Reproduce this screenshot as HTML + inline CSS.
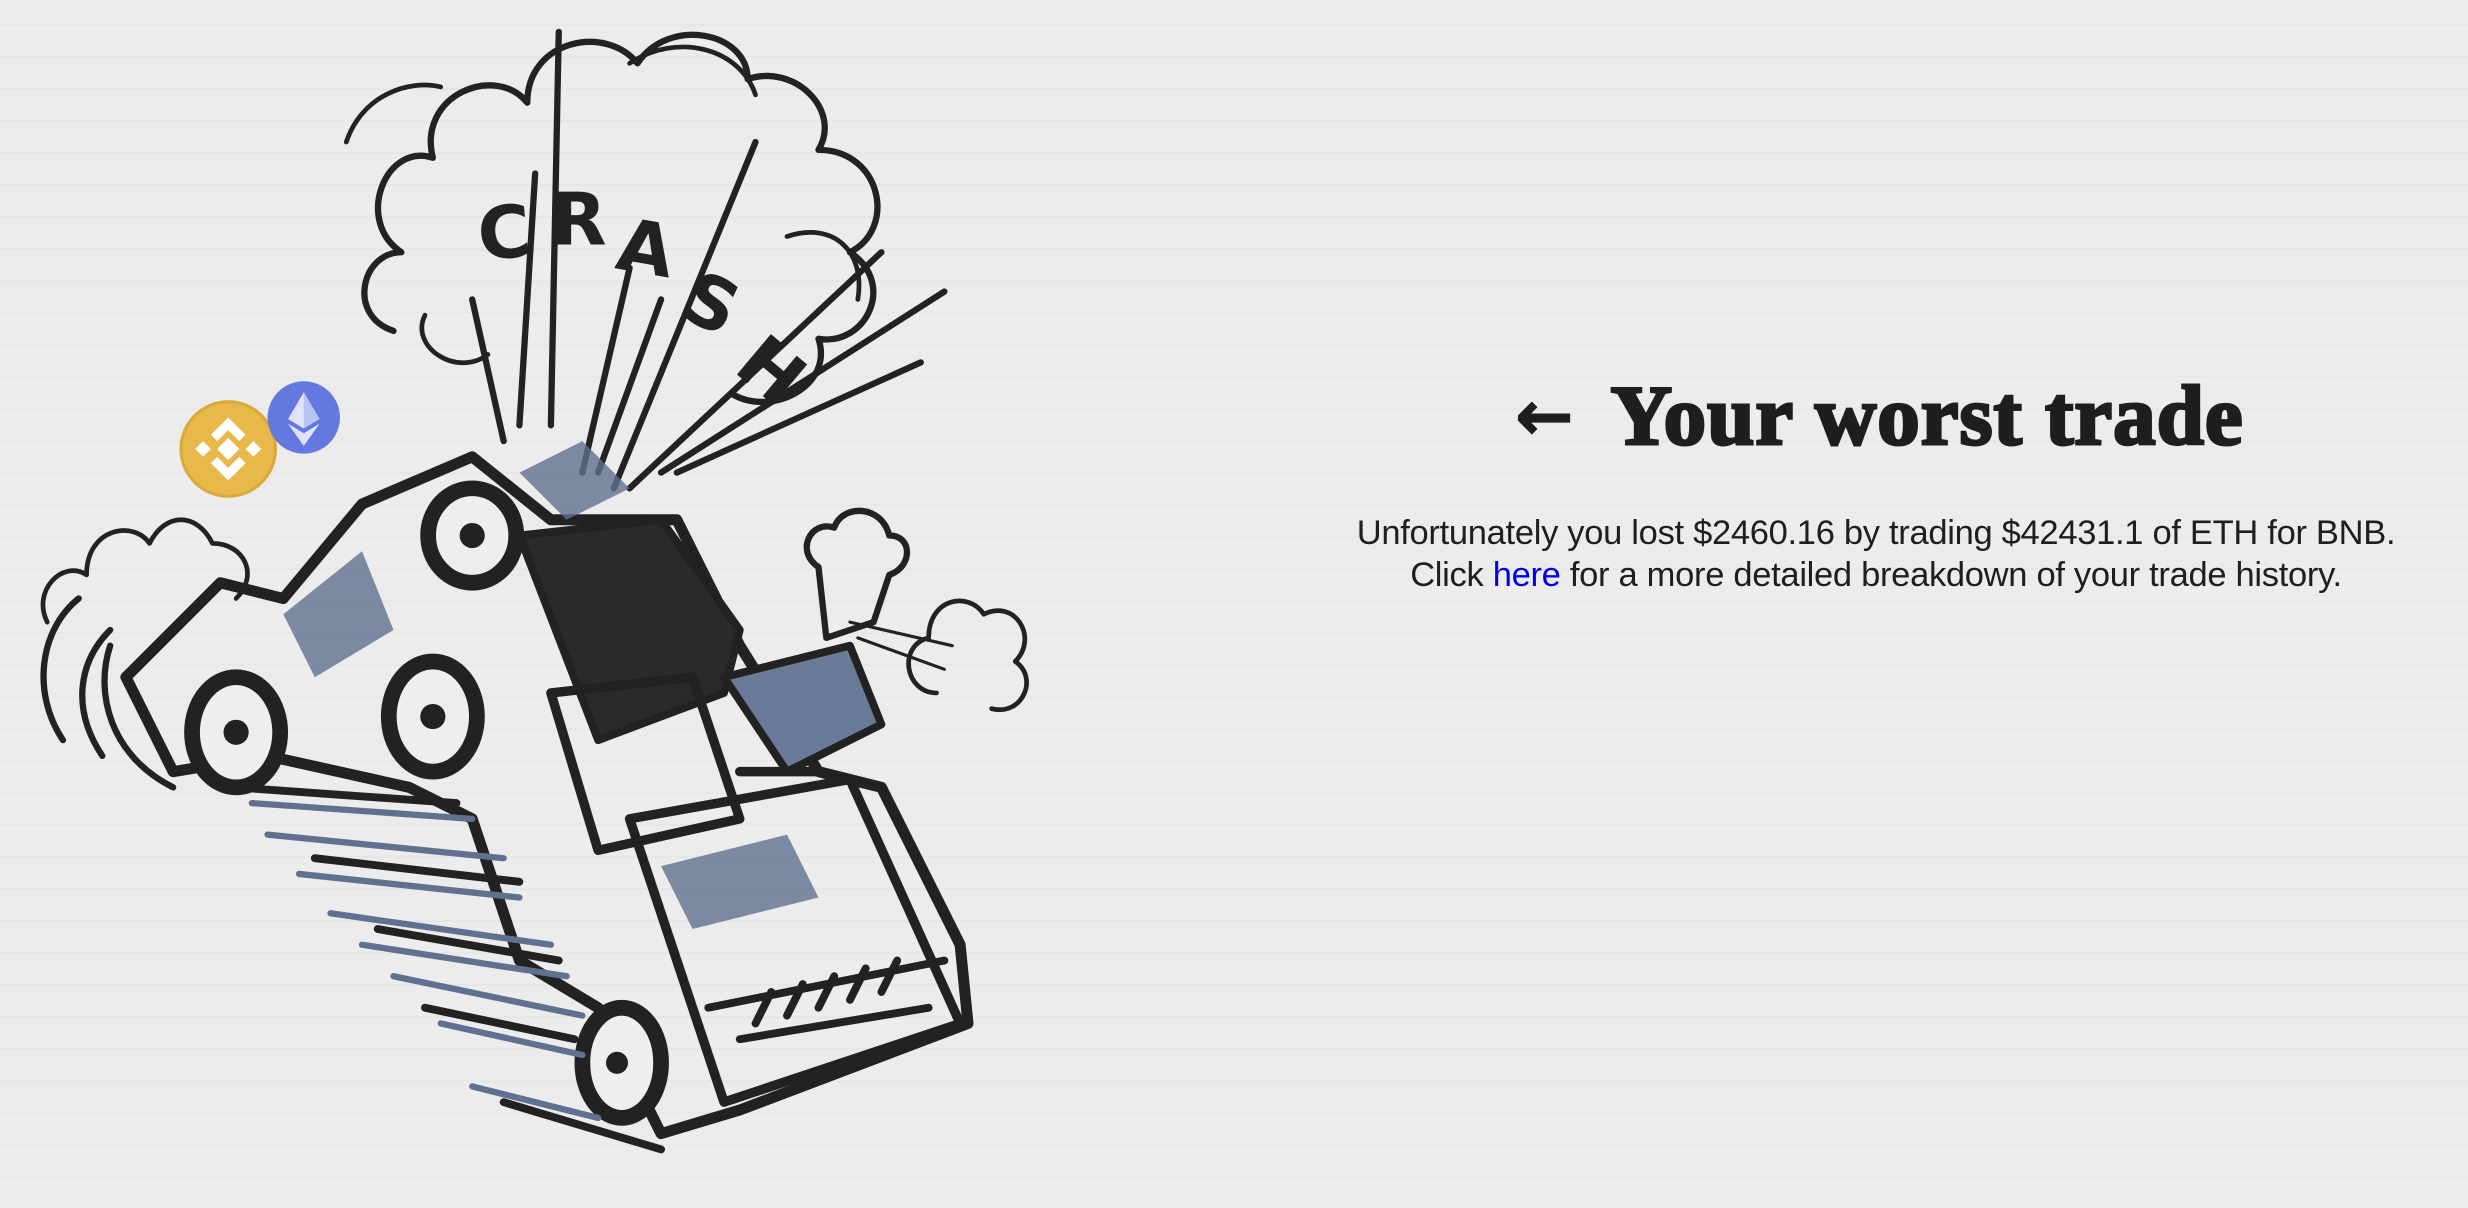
<!DOCTYPE html>
<html><head><meta charset="utf-8"><style>
html,body{margin:0;padding:0}
body{width:2468px;height:1208px;overflow:hidden;background:#ececec;position:relative;
background-image:repeating-linear-gradient(0deg,transparent 0 30px,rgba(0,0,0,.02) 30px 32px);}
#art{position:absolute;left:0;top:0}
.title{position:absolute;left:1515px;top:366px;font-family:"Liberation Serif",serif;font-weight:bold;font-size:85px;color:#1e1e1e;-webkit-text-stroke:3px #1e1e1e;letter-spacing:1px;white-space:nowrap;line-height:100px}
.title .ar{font-family:"DejaVu Sans",sans-serif;font-size:70px;-webkit-text-stroke:1px #1e1e1e;margin-right:36px;vertical-align:4px}
.txt{position:absolute;left:1276px;width:1200px;top:512px;text-align:center;font-family:"Liberation Sans",sans-serif;font-size:34.5px;line-height:42px;color:#1e1e1e;letter-spacing:-0.3px}
.txt a{color:#0000ee;text-decoration:none}
</style></head><body>
<svg id="art" width="2468" height="1208" viewBox="0 0 1568 767">
<g fill="none" stroke="#222" stroke-width="5" stroke-linecap="round" stroke-linejoin="round">
<path d="M250 210c-30-10-20-50 5-50c-30-20-10-70 20-60c-10-40 40-60 60-35c0-40 50-50 70-25c20-30 70-20 70 10c30-10 60 20 45 45c40 0 50 50 20 65c30 20 10 60-20 55c10 30-30 50-55 35" stroke-width="4"/>
<path d="M220 90c10-30 40-40 60-35M400 40c30-20 70-10 80 20M500 150c30-10 50 10 45 40M270 200c-10 20 20 40 40 25" stroke-width="3"/>
<path d="M355 20L350 270M340 110L330 270M300 190L320 280M400 170L370 300M420 190L380 300M480 90L390 310M560 160L400 310M600 185L420 300M585 230L430 300" stroke-width="4"/>
<path d="M30 395c-10-20 10-40 25-30c0-30 30-35 40-20c10-20 30-20 40 0c20 0 30 20 15 35" stroke-width="3"/>
<path d="M40 470c-20-30-15-70 10-90M65 480c-20-30-15-60 5-80M110 500c-40-20-50-60-40-90" stroke-width="4"/>
<path d="M595 440c-20 0-25-30-5-35c0-25 25-30 35-15c20-10 35 15 20 30c15 10 5 35-15 30" stroke-width="3"/>
<path d="M540 395L605 410M545 405L600 425" stroke-width="2"/>
<path d="M80 430L140 370L180 380L230 320L300 290L350 330L430 330L470 410L520 490L560 500L610 600L615 650L470 705L420 720L380 640L330 610L300 520L260 500L170 480L110 490Z" stroke-width="7"/>
<path d="M330 340L420 330L470 400L460 440L380 470Z" fill="#2a2a2a"/>
<path d="M400 520L540 495L610 650L460 700Z" stroke-width="6"/>
<path d="M350 440L440 430L470 520L380 540Z" stroke-width="6"/>
<path d="M450 640L600 610M470 660L590 640M480 650l10-20M500 645l10-20M520 640l10-20M540 635l10-20M560 630l10-20" stroke-width="5"/>
<path d="M520 360c-15-10-5-30 10-25c5-15 30-15 35 5c15 0 15 20 0 25l-10 30l-30 10Z" stroke-width="4"/>
<path d="M460 430L540 410L560 460L500 490Z" stroke-width="5" fill="#6a7a99"/>
<path d="M470 490h50" stroke-width="6"/>
</g>
<g stroke="#222" stroke-width="10" fill="#eee">
<ellipse cx="150" cy="465" rx="28" ry="35"/>
<ellipse cx="275" cy="455" rx="28" ry="35"/>
<ellipse cx="300" cy="340" rx="28" ry="30"/>
<ellipse cx="395" cy="675" rx="25" ry="35"/>
</g>
<g fill="#222"><circle cx="150" cy="465" r="8"/><circle cx="275" cy="455" r="8"/><circle cx="300" cy="340" r="8"/><circle cx="392" cy="675" r="7"/></g>
<g stroke="#5f7090" stroke-width="4" stroke-linecap="round">
<path d="M160 510L300 520M170 530L320 545M190 555L330 570M210 580L350 600M230 600L360 620M250 620L370 645M280 650L370 670M300 690L380 710"/>
</g>
<g stroke="#222" stroke-width="5" stroke-linecap="round">
<path d="M150 500L290 510M200 545L330 560M240 590L355 610M270 640L365 660M320 700L420 730"/>
</g>
<g fill="#5f7090" opacity=".8"><path d="M180 390L230 350L250 400L200 430Z"/><path d="M330 300l40-20l30 30l-40 20Z"/><path d="M420 550l80-20l20 40l-80 20Z"/></g>
<g font-family="DejaVu Sans,sans-serif" font-weight="bold" fill="#222" font-size="46">
<text x="305" y="165" transform="rotate(-5 305 165)">C</text>
<text x="350" y="155">R</text>
<text x="390" y="170" transform="rotate(10 390 170)">A</text>
<text x="430" y="200" transform="rotate(25 430 200)">S</text>
<text x="465" y="235" transform="rotate(40 465 235)">H</text>
</g>
<circle cx="145" cy="285" r="30" fill="#e8b84a" stroke="#d9a93c" stroke-width="2"/>
<g fill="#fff" transform="translate(145 285)">
<rect x="-5" y="-5" width="10" height="10" transform="rotate(45)"/>
<rect x="-3.5" y="-3.5" width="7" height="7" transform="translate(-16 0) rotate(45)"/>
<rect x="-3.5" y="-3.5" width="7" height="7" transform="translate(16 0) rotate(45)"/>
<path d="M0 -20L11 -9L7 -5L0 -12L-7 -5L-11 -9Z"/>
<path d="M0 20L11 9L7 5L0 12L-7 5L-11 9Z"/>
</g>
<circle cx="193" cy="265" r="23" fill="#6479e0"/>
<g transform="translate(193 265)">
<path d="M0 -16L-10 1L0 7L10 1Z" fill="#dfe4fb"/>
<path d="M0 -16L0 7L10 1Z" fill="#b9c3f4"/>
<path d="M-10 4L0 10L10 4L0 18Z" fill="#dfe4fb"/>
</g>
</svg>
<div class="title"><span class="ar">←</span>Your worst trade</div>
<div class="txt">Unfortunately you lost $2460.16 by trading $42431.1 of ETH for BNB.<br>Click <a>here</a> for a more detailed breakdown of your trade history.</div>
</body></html>
